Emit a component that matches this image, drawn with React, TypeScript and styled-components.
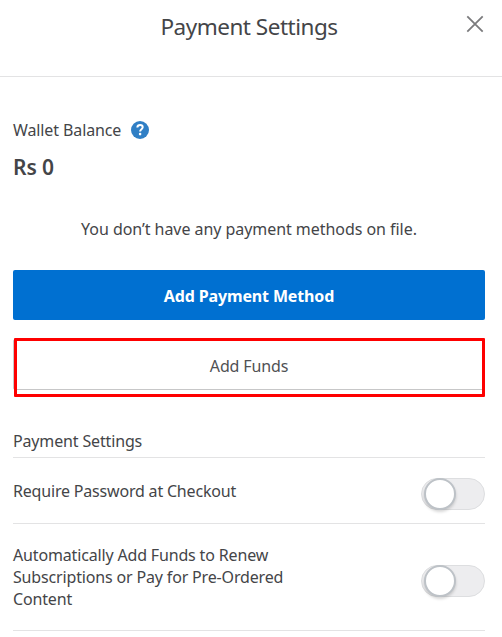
import React from "react";
import styled, { createGlobalStyle } from "styled-components";

const GlobalStyle = createGlobalStyle`
  *, *::before, *::after { box-sizing: border-box; }
  body {
    margin: 0;
    background: #fff;
    color: #444548;
    font-family: "Noto Sans", "Open Sans", sans-serif;
    font-size: 16px;
    line-height: 22px;
    overflow: hidden;
  }
`;

const Panel = styled.main`
  height: 637px;
  display: flex;
  flex-direction: column;
  overflow: hidden;
`;

const Header = styled.header`
  display: grid;
  grid-template-columns: 60px 1fr 60px;
  height: 77px;
  flex: none;
  border-bottom: 1px solid #e3e3e4;
`;

const Title = styled.h1`
  grid-column: 2;
  margin: 11px 0 0;
  padding-right: 4px;
  text-align: center;
  font-size: 22.5px;
  line-height: 32px;
  font-weight: 400;
  letter-spacing: -0.48px;
`;

const CloseButton = styled.button`
  width: 18px;
  height: 18px;
  margin: 15px 0 0 24px;
  padding: 0;
  border: 0;
  background: none;
  svg { display: block; }
`;

const Content = styled.div`
  display: flex;
  flex-direction: column;
  padding: 42px 17px 0 13px;
`;

const WalletLabel = styled.div`
  display: flex;
  align-items: center;
  gap: 10px;
  letter-spacing: -0.11px;
`;

const Help = styled.svg`
  display: block;
`;

const Balance = styled.div`
  margin-top: 12px;
  font-size: 21px;
  line-height: 28px;
  font-weight: 600;
  letter-spacing: -0.1px;
`;

const Notice = styled.p`
  margin: 37px 0 0;
  text-align: center;
  letter-spacing: -0.05px;
`;

const Button = styled.button<{ $primary?: boolean }>`
  display: block;
  width: 100%;
  height: ${(p) => (p.$primary ? 50 : 51)}px;
  padding: ${(p) => (p.$primary ? 2 : 3)}px 0 0;
  border: ${(p) => (p.$primary ? "0" : "1px solid #c7c7c8")};
  border-radius: 2px;
  background: ${(p) => (p.$primary ? "#0070d1" : "#fff")};
  color: ${(p) => (p.$primary ? "#fff" : "#505154")};
  font: inherit;
  font-weight: ${(p) => (p.$primary ? 700 : 400)};
  letter-spacing: -0.14px;
`;

const PrimaryArea = styled.div`
  margin-top: 30px;
`;

const Highlighted = styled.div`
  position: relative;
  margin-top: 19px;
  height: 58px;
  &::after {
    content: "";
    position: absolute;
    inset: -1px 0 0 1px;
    border: 3px solid #fe0000;
    border-radius: 1px;
  }
`;

const SectionTitle = styled.h2`
  margin: 33px 0 0;
  height: 28px;
  border-bottom: 1px solid #e3e3e4;
  font-size: 16px;
  font-weight: 400;
  letter-spacing: -0.15px;
`;

const SettingRow = styled.div<{ $height: number }>`
  display: flex;
  justify-content: space-between;
  height: ${(p) => p.$height}px;
  padding-top: 20px;
  border-bottom: 1px solid #e3e3e4;
`;

const SettingLabel = styled.span<{ $drop?: number }>`
  width: 300px;
  margin-top: ${(p) => p.$drop ?? 0}px;
  white-space: pre-line;
  letter-spacing: ${(p) => (p.$drop ? -0.19 : -0.16)}px;
`;

const Switch = styled.button<{ $offset: number }>`
  display: flex;
  width: 64px;
  height: 32px;
  margin: ${(p) => p.$offset}px 0 0;
  padding: 0 0 0 3px;
  border: 1px solid #dddee0;
  border-radius: 16px;
  background: #ededef;
`;

const Knob = styled.span`
  width: 32px;
  height: 32px;
  margin-top: -1px;
  margin-left: -1px;
  border: 2px solid #bdc2c7;
  border-radius: 50%;
  background: #fff;
  box-shadow: 0 2px 3px rgba(0, 0, 0, 0.16);
`;

export default function App() {
  return (
    <>
      <GlobalStyle />
      <Panel>
        <Header>
          <Title>Payment Settings</Title>
          <CloseButton aria-label="Close">
            <svg width="18" height="18" viewBox="0 0 18 18">
              <path d="M1.3 1.3 16.7 16.7M16.7 1.3 1.3 16.7" stroke="#7b7b7d" strokeWidth="1.8" />
            </svg>
          </CloseButton>
        </Header>
        <Content>
          <WalletLabel>
            <span>Wallet Balance</span>
            <Help width="18" height="18" viewBox="0 0 18 18" aria-label="Help">
              <circle cx="9" cy="9" r="9" fill="#307fc5" />
              <path
                d="M6.3 6.5C6.5 4.7 7.5 4.1 9.1 4.1c1.6 0 2.6.8 2.6 2.2 0 1.9-2.6 1.9-2.6 4.2"
                fill="none"
                stroke="#fff"
                strokeWidth="2"
              />
              <circle cx="9.1" cy="13.1" r="1.3" fill="#fff" />
            </Help>
          </WalletLabel>
          <Balance>Rs 0</Balance>
          <Notice>You don’t have any payment methods on file.</Notice>
          <PrimaryArea>
            <Button $primary>Add Payment Method</Button>
          </PrimaryArea>
          <Highlighted>
            <Button>Add Funds</Button>
          </Highlighted>
          <SectionTitle>Payment Settings</SectionTitle>
          <SettingRow $height={66}>
            <SettingLabel $drop={2}>Require Password at Checkout</SettingLabel>
            <Switch $offset={0} role="switch" aria-checked="false" aria-label="Require Password at Checkout">
              <Knob />
            </Switch>
          </SettingRow>
          <SettingRow $height={107}>
            <SettingLabel>
              {"Automatically Add Funds to Renew\nSubscriptions or Pay for Pre-Ordered\nContent"}
            </SettingLabel>
            <Switch $offset={21} role="switch" aria-checked="false" aria-label="Automatically Add Funds">
              <Knob />
            </Switch>
          </SettingRow>
        </Content>
      </Panel>
    </>
  );
}
